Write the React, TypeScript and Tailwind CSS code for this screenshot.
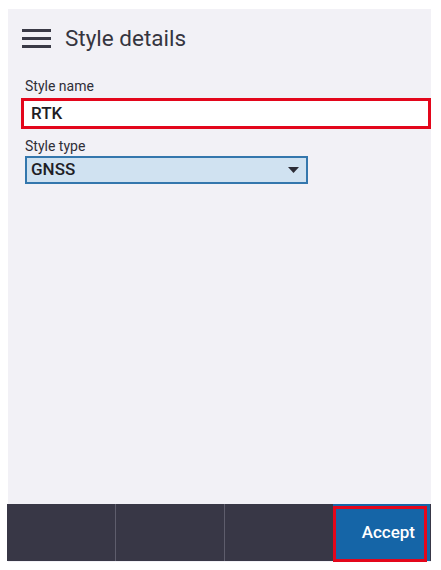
export default function App() {
  return (
    <div
      className="w-[441px] h-[570px] bg-white pl-[8px] pt-[9px]"
      style={{ fontFamily: 'Roboto, "Noto Sans", sans-serif' }}
    >
      <div className="w-[423px] h-[553px] bg-[#f2f1f6] flex flex-col">
        <div className="flex items-center h-[58px] pl-[14px]">
          <div className="flex flex-col gap-[5px] w-[29px]">
            <div className="h-[3px] bg-[#3a3a46]" />
            <div className="h-[3px] bg-[#3a3a46]" />
            <div className="h-[3px] bg-[#3a3a46]" />
          </div>
          <span className="ml-[14px] text-[22.5px] text-[#36353f] leading-none">Style details</span>
        </div>

        <div className="flex flex-col pl-[13px]">
          <label className="text-[14px] text-[#2f2e38] leading-none mt-[12px] ml-[4px]">Style name</label>
          <div className="mt-[5px] w-[410px] h-[31px] bg-white border-[3px] border-[#e3061b] flex items-center pl-[7px]">
            <span className="text-[17px] font-medium text-[#1e1e26]">RTK</span>
          </div>
          <label className="text-[14px] text-[#2f2e38] leading-none mt-[10px] ml-[4px]">Style type</label>
          <div className="mt-[3px] ml-[4px] w-[283px] h-[28px] bg-[#d0e2f1] border-2 border-[#3477ad] flex items-center justify-between pl-[4px] pr-[7px]">
            <span className="text-[17px] font-medium text-[#1e1e26]">GNSS</span>
            <svg width="11" height="6" viewBox="0 0 11 6">
              <path d="M0 0H11L5.5 6Z" fill="#2c2c36" />
            </svg>
          </div>
        </div>

        <div className="flex-1" />

        <div className="h-[57px] mb-[1px] -ml-[1px] bg-[#383746] grid grid-cols-[108px_1px_108px_1px_108px_97px]">
          <div />
          <div className="bg-[#5e5d6c]" />
          <div />
          <div className="bg-[#5e5d6c]" />
          <div />
          <div className="bg-[#1565a7] relative">
            <div className="absolute left-0 top-[2px] right-[3px] bottom-[-1px] border-[3px] border-[#e3061b]" />
            <div className="h-full flex items-center justify-end pr-[15px]">
              <span className="text-[17px] font-medium text-white">Accept</span>
            </div>
          </div>
        </div>
      </div>
    </div>
  )
}
